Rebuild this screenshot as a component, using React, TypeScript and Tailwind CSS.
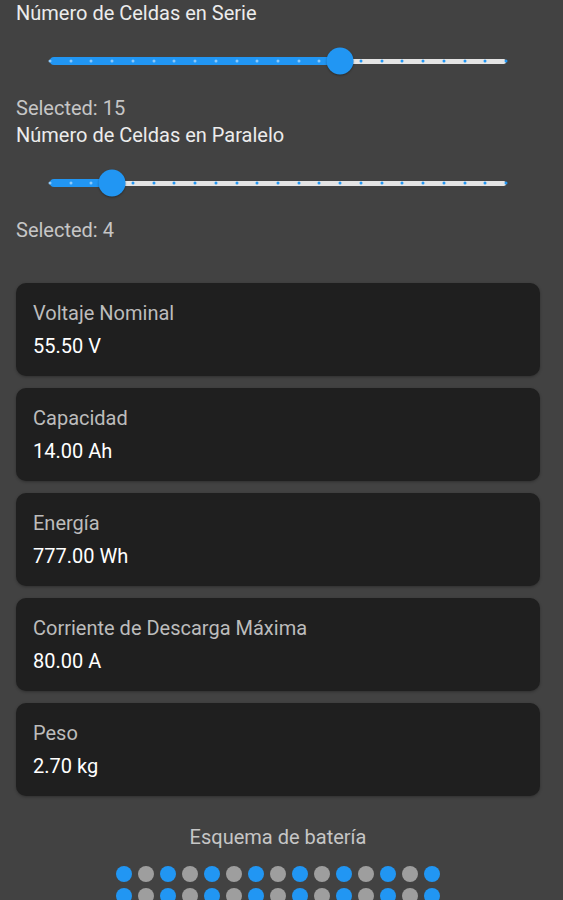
import React from "react";

const MIN = 1;
const MAX = 23;

const metrics = [
  { label: "Voltaje Nominal", value: "55.50 V" },
  { label: "Capacidad", value: "14.00 Ah" },
  { label: "Energía", value: "777.00 Wh" },
  { label: "Corriente de Descarga Máxima", value: "80.00 A" },
  { label: "Peso", value: "2.70 kg" },
];

function CellSlider({ value }: { value: number }) {
  const steps = MAX - MIN;
  const pct = ((value - MIN) / steps) * 100;
  const ticks = Array.from({ length: steps + 1 }, (_, i) => i);

  return (
    <div className="relative mx-[34px] h-[68px]">
      <div className="absolute inset-x-0 top-1/2 flex -translate-y-1/2 items-center">
        <div className="h-[8px] rounded-full bg-[#2196f3]" style={{ width: `${pct}%` }} />
        <div className="h-[5px] flex-1 rounded-r-full bg-[#e4e4e4]" />
      </div>
      {ticks.map((i) => {
        const left = (i / steps) * 100;
        const active = i <= value - MIN;
        return (
          <span
            key={i}
            className={`absolute top-1/2 h-[3px] w-[3px] -translate-x-1/2 -translate-y-1/2 rounded-full ${
              active ? "bg-[#8cc8f8]" : "bg-[#2196f3]"
            }`}
            style={{ left: `${left}%` }}
          />
        );
      })}
      <span
        className="absolute top-1/2 h-[27px] w-[27px] -translate-x-1/2 -translate-y-1/2 rounded-full bg-[#2196f3] shadow-[0_1px_2px_rgba(0,0,0,0.35)]"
        style={{ left: `${pct}%` }}
      />
    </div>
  );
}

function SliderBlock({ title, value }: { title: string; value: number }) {
  return (
    <div>
      <div className="text-[20px] leading-[27px] text-[#ececec]">{title}</div>
      <CellSlider value={value} />
      <div className="text-[20px] leading-[27px] text-[#c6c6c6]">Selected: {value}</div>
    </div>
  );
}

function MetricCard({ label, value }: { label: string; value: string }) {
  return (
    <div className="rounded-[10px] bg-[#1f1f1f] px-[17px] py-[18px] shadow-[0_1px_3px_rgba(0,0,0,0.3)]">
      <div className="text-[20px] leading-[24px] text-[#bcbcbc]">{label}</div>
      <div className="mt-[9px] text-[20px] leading-[24px] text-white">{value}</div>
    </div>
  );
}

export default function App() {
  const series = 15;
  const parallel = 4;

  return (
    <div
      className="min-h-screen bg-[#424242] pb-6 pl-4 pr-[23px]"
      style={{ fontFamily: "Roboto, 'Noto Sans', sans-serif" }}
    >
      <SliderBlock title="Número de Celdas en Serie" value={series} />
      <SliderBlock title="Número de Celdas en Paralelo" value={parallel} />

      <div className="mt-[39px] flex flex-col gap-3">
        {metrics.map((m) => (
          <MetricCard key={m.label} label={m.label} value={m.value} />
        ))}
      </div>

      <div className="mt-[28px] text-center text-[20px] leading-[26px] text-[#c6c6c6]">
        Esquema de batería
      </div>
      <div className="mt-4 flex flex-col items-center gap-[6px]">
        {Array.from({ length: parallel }, (_, r) => (
          <div key={r} className="flex gap-[6px]">
            {Array.from({ length: series }, (_, c) => (
              <span
                key={c}
                className={`h-4 w-4 rounded-full ${c % 2 === 0 ? "bg-[#2196f3]" : "bg-[#9e9e9e]"}`}
              />
            ))}
          </div>
        ))}
      </div>
    </div>
  );
}
